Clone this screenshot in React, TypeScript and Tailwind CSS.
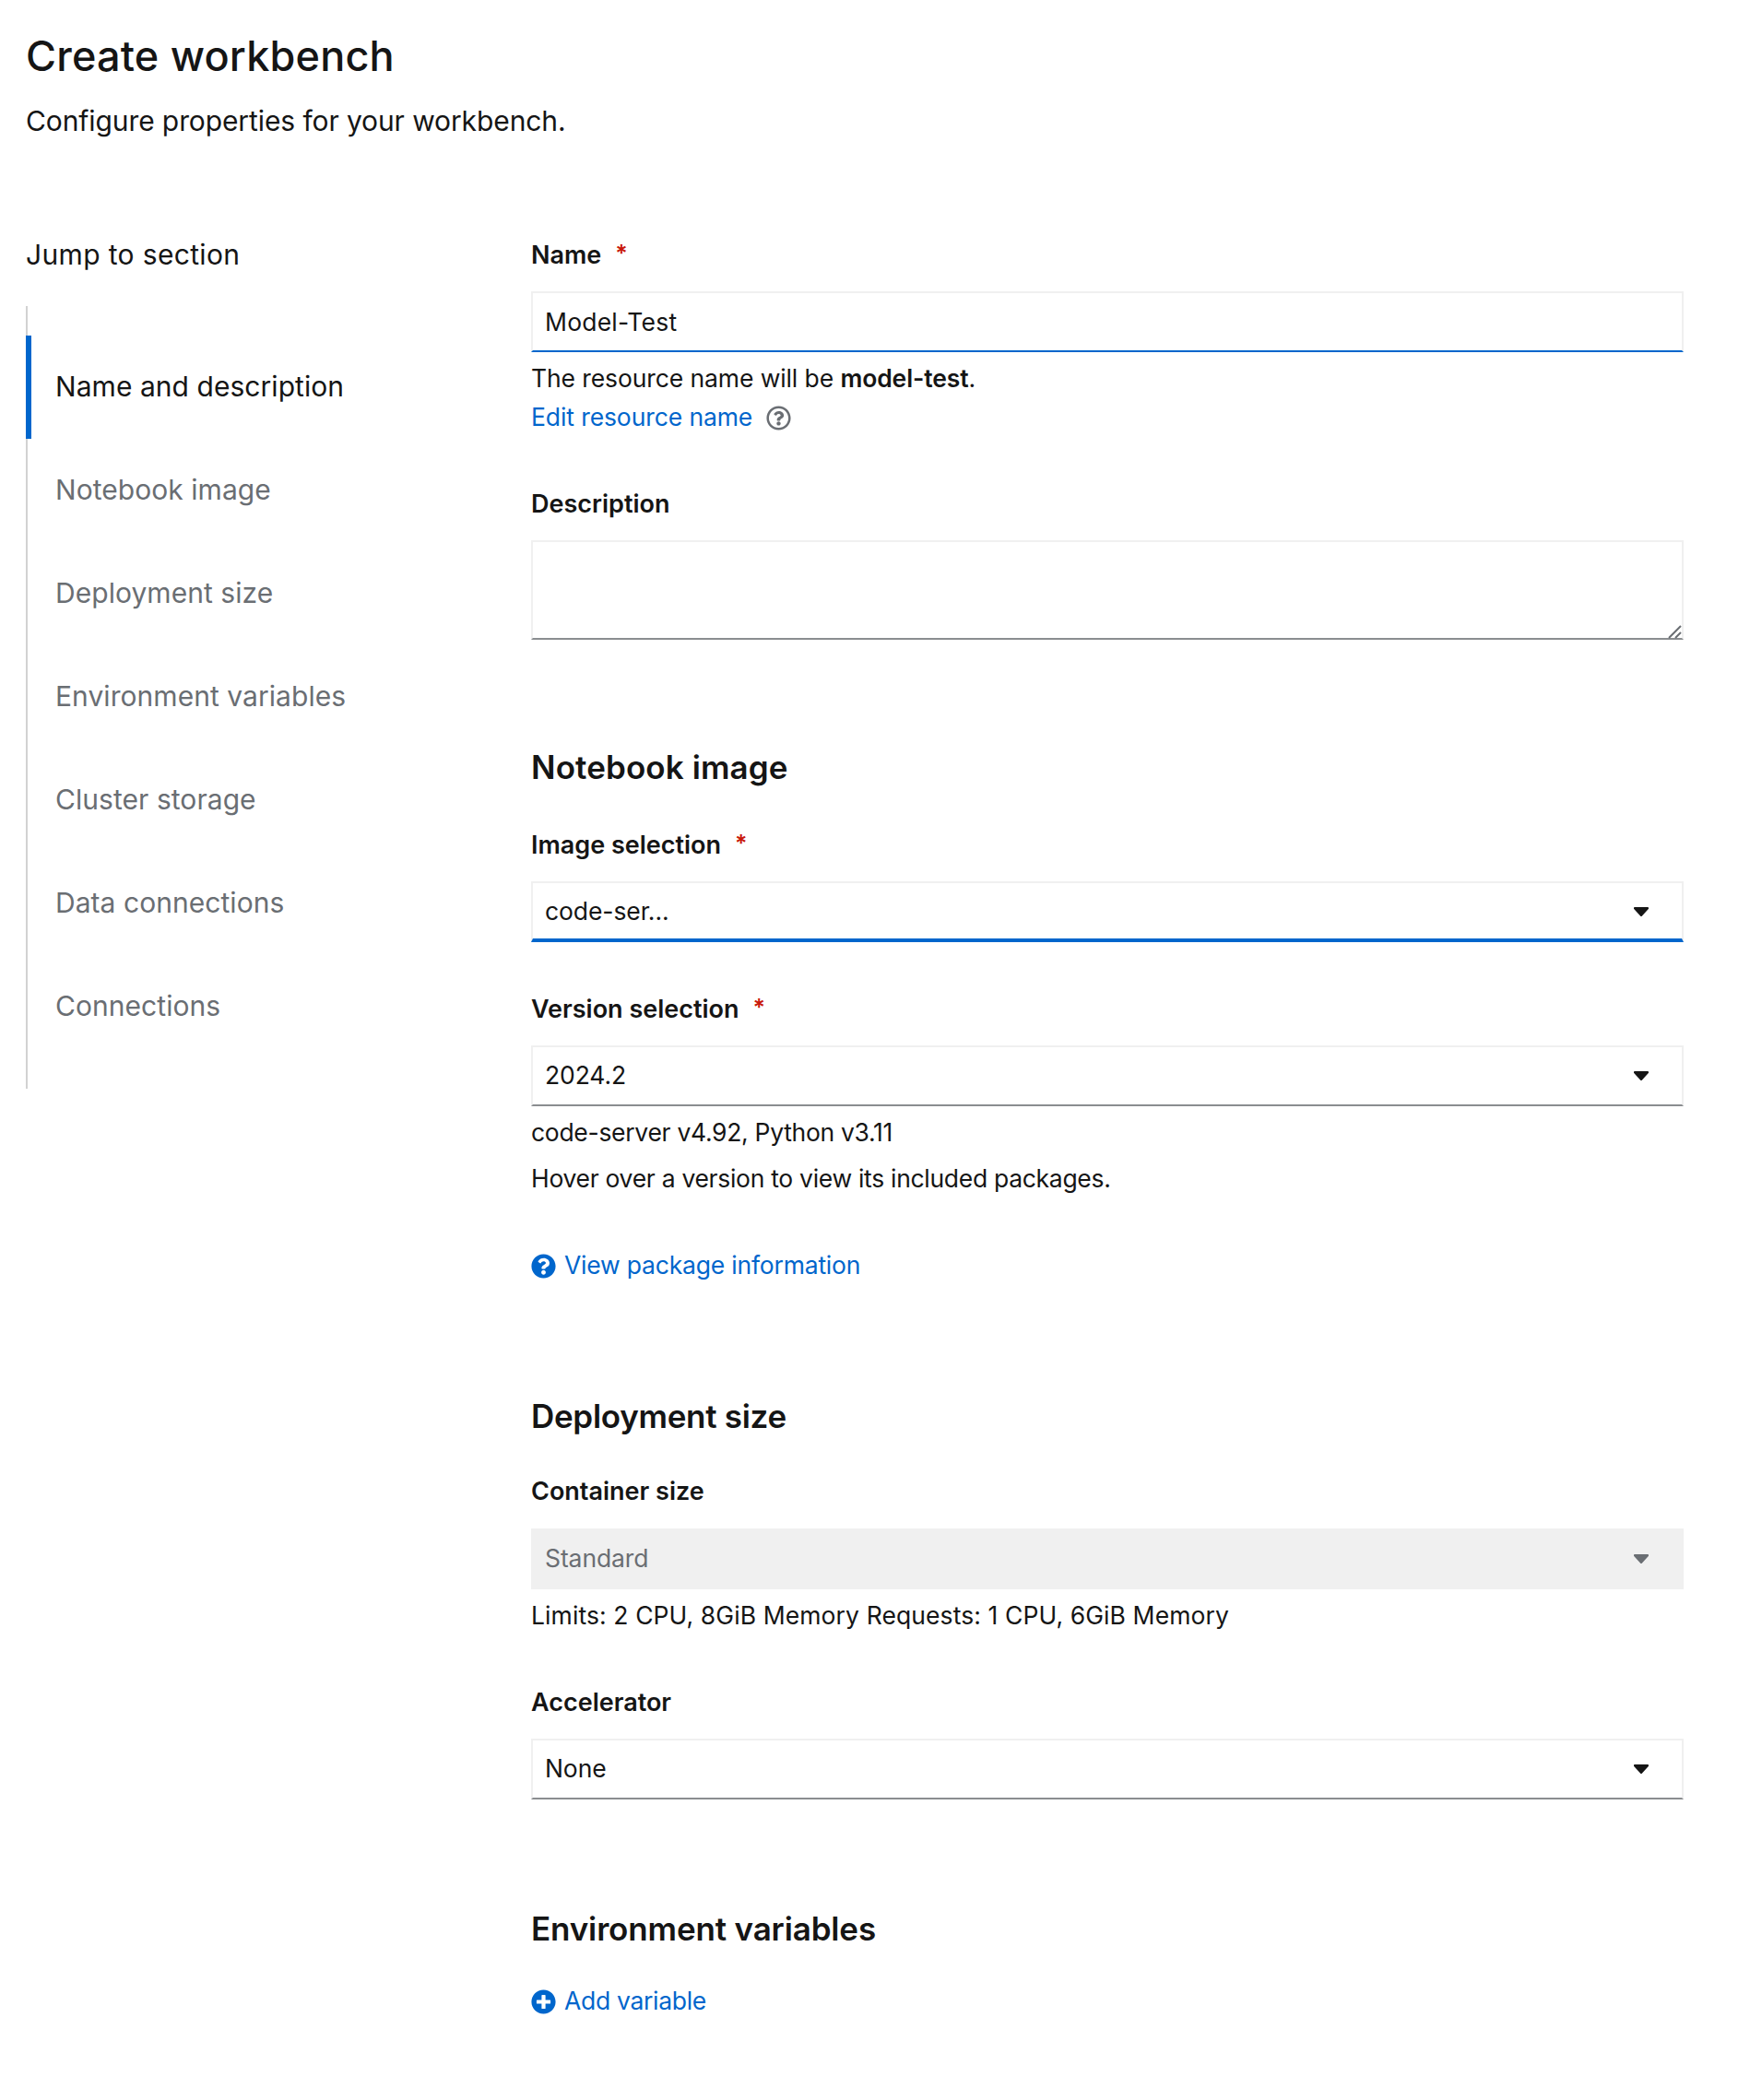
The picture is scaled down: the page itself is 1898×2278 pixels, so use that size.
const font = { fontFamily: 'Inter, "Liberation Sans", sans-serif' };

const navItems = [
  'Name and description',
  'Notebook image',
  'Deployment size',
  'Environment variables',
  'Cluster storage',
  'Data connections',
  'Connections',
];

function Caret({ muted }: { muted?: boolean }) {
  return (
    <svg viewBox="14 192 292 168" preserveAspectRatio="none" className={`h-[10px] w-[16px] ${muted ? 'fill-[#6a6e73]' : 'fill-[#151515]'}`}>
      <path d="M31.3 192h257.3c17.8 0 26.7 21.5 14.1 34.1L174.1 354.8c-7.8 7.8-20.5 7.8-28.3 0L17.2 226.1C4.6 213.5 13.5 192 31.3 192z" />
    </svg>
  );
}

function Label({ text, required, className }: { text: string; required?: boolean; className: string }) {
  return (
    <div className={`flex h-[44px] items-center text-[27px] font-semibold text-[#151515] ${className}`}>
      {text}
      {required && <span className="ml-[15px] -translate-y-[1px] text-[25px] text-[#c9190b]">*</span>}
    </div>
  );
}

function Select({ value, className, focused, disabled }: { value: string; className: string; focused?: boolean; disabled?: boolean }) {
  const tone = disabled
    ? 'border-[#f0f0f0] bg-[#f0f0f0] text-[#6a6e73]'
    : focused
      ? 'border-[#f0f0f0] border-b-[4px] border-b-[#0066cc] pt-[2px]'
      : 'border-[#f0f0f0] border-b-[#8a8d90]';
  return (
    <div className={`flex h-[66px] items-center justify-between border-[2px] pl-[13px] pr-[36px] text-[26.5px] tracking-[-0.1px] ${tone} ${className}`}>
      <span>{value}</span>
      <Caret muted={disabled} />
    </div>
  );
}

function Help({ children, className }: { children: React.ReactNode; className: string }) {
  return <div className={`flex h-[40px] items-center whitespace-pre text-[26.5px] text-[#151515] ${className}`}>{children}</div>;
}

function Heading({ text, className }: { text: string; className: string }) {
  return <h2 className={`flex h-[52px] items-center text-[35px] font-semibold text-[#151515] ${className}`}>{text}</h2>;
}

function LinkButton({ text, path, className }: { text: string; path: string; className: string }) {
  return (
    <div className={`flex h-[40px] items-center gap-[9px] text-[26.5px] text-[#0066cc] ${className}`}>
      <svg viewBox="0 0 512 512" className="h-[27px] w-[27px] fill-[#0066cc]">
        <path d={path} />
      </svg>
      {text}
    </div>
  );
}

export default function App() {
  return (
    <div className="min-h-[2278px] bg-white pl-[28px] pr-[72px] pt-[32px] text-[#151515]" style={font}>
      <h1 className="flex h-[60px] items-center pb-[3px] text-[45px] font-medium tracking-[0.2px]">Create workbench</h1>
      <p className="mt-[18px] flex h-[44px] items-center pb-[2px] text-[30px] tracking-[-0.1px]">Configure properties for your workbench.</p>

      <div className="mt-[101px] flex">
        <aside className="w-[548px] shrink-0">
          <div className="flex h-[44px] items-center pb-[2px] text-[30px] tracking-[0.35px]">Jump to section</div>
          <nav className="mt-[33px] w-[2px] border-l-[2px] border-[#d2d2d2] pb-[33px] pt-[32px]">
            {navItems.map((item, i) => (
              <div
                key={item}
                className={`-ml-[2px] flex h-[112px] w-[500px] items-center whitespace-nowrap pb-[2px] text-[30px] tracking-[0.05px] ${
                  i === 0 ? 'border-l-[6px] border-[#0066cc] pl-[26px] text-[#151515]' : 'pl-[32px] text-[#6a6e73]'
                }`}
              >
                {item}
              </div>
            ))}
          </nav>
        </aside>

        <main className="min-w-0 flex-1">
          <Label text="Name" required className="" />
          <input
            readOnly
            value="Model-Test"
            className="mt-[17px] block h-[66px] w-full border-[2px] border-[#f0f0f0] border-b-[#0066cc] pb-[1px] pl-[13px] text-[26.5px] tracking-[0.2px] outline-none"
          />
          <Help className="mt-[9px] tracking-[-0.1px]">
            The resource name will be <b className="font-semibold">model-test</b>.
          </Help>
          <Help className="mt-[2px] tracking-[-0.1px]">
            <span className="text-[#0066cc]">Edit resource name</span>
            <svg viewBox="0 0 512 512" className="ml-[15px] h-[27px] w-[27px] fill-[#6a6e73]">
              <path d="M256 8C119.043 8 8 119.083 8 256c0 136.997 111.043 248 248 248s248-111.003 248-248C504 119.083 392.957 8 256 8zm0 448c-110.532 0-200-89.431-200-200 0-110.495 89.472-200 200-200 110.491 0 200 89.471 200 200 0 110.53-89.431 200-200 200zm107.244-255.2c0 67.052-72.421 68.084-72.421 92.863V300c0 6.627-5.373 12-12 12h-45.647c-6.627 0-12-5.373-12-12v-8.659c0-35.745 27.1-50.034 47.579-61.516 17.561-9.845 28.324-16.541 28.324-29.579 0-17.246-21.999-28.693-39.784-28.693-23.189 0-33.894 10.977-48.942 29.969-4.057 5.12-11.46 6.071-16.666 2.124l-27.824-21.098c-5.107-3.872-6.251-11.066-2.644-16.363C184.846 131.491 214.94 112 261.794 112c49.071 0 101.45 38.304 101.45 88.8zM298 368c0 23.159-18.841 42-42 42s-42-18.841-42-42 18.841-42 42-42 42 18.841 42 42z" />
            </svg>
          </Help>
          <Label text="Description" className="mt-[52px]" />
          <div className="relative mt-[17px]">
            <textarea className="block h-[108px] w-full resize-none border-[2px] border-[#f0f0f0] border-b-[#8a8d90] outline-none" />
            <svg viewBox="0 0 16 16" className="absolute bottom-[1px] right-[1px] h-[16px] w-[16px] stroke-[#6a6e73] stroke-[2px]">
              <path d="M1 15 L14 2 M8 15 L14 9" />
            </svg>
          </div>

          <Heading text="Notebook image" className="mt-[113px] pb-[1px] tracking-[0.1px]" />
          <Label text="Image selection" required className="mt-[36px]" />
          <Select value="code-ser..." focused className="mt-[17px]" />
          <Label text="Version selection" required className="mt-[51px]" />
          <Select value="2024.2" className="mt-[17px]" />
          <Help className="mt-[9px] tracking-[-0.3px]">code-server v4.92, Python v3.11</Help>
          <Help className="mt-[10px] tracking-[-0.3px]">Hover over a version to view its included packages.</Help>
          <LinkButton
            text="View package information"
            className="mt-[54px] tracking-[-0.2px]"
            path="M504 256c0 136.997-111.043 248-248 248S8 392.997 8 256C8 119.083 119.043 8 256 8s248 111.083 248 248zM262.655 90c-54.497 0-89.255 22.957-116.549 63.758-3.536 5.286-2.353 12.415 2.715 16.258l34.699 26.31c5.205 3.947 12.621 3.008 16.665-2.122 17.864-22.658 30.113-35.797 57.303-35.797 20.429 0 45.698 13.148 45.698 32.958 0 14.976-12.363 22.667-32.534 33.976C247.128 238.528 216 254.941 216 296v4c0 6.627 5.373 12 12 12h56c6.627 0 12-5.373 12-12v-1.333c0-28.462 83.186-29.647 83.186-106.667 0-58.002-60.165-102-116.531-102zM256 338c-25.365 0-46 20.635-46 46 0 25.364 20.635 46 46 46s46-20.636 46-46c0-25.365-20.635-46-46-46z"
          />

          <Heading text="Deployment size" className="mt-[117px] tracking-[-0.3px]" />
          <Label text="Container size" className="mt-[34px]" />
          <Select value="Standard" disabled className="mt-[18px]" />
          <Help className="mt-[9px] tracking-[0.1px]">Limits: 2 CPU, 8GiB Memory Requests: 1 CPU, 6GiB Memory</Help>
          <Label text="Accelerator" className="mt-[52px]" />
          <Select value="None" className="mt-[17px]" />

          <Heading text="Environment variables" className="mt-[114px] tracking-[-0.15px]" />
          <LinkButton
            text="Add variable"
            className="mt-[33px] tracking-[-0.3px]"
            path="M256 8C119 8 8 119 8 256s111 248 248 248 248-111 248-248S393 8 256 8zm144 276c0 6.6-5.4 12-12 12h-92v92c0 6.6-5.4 12-12 12h-56c-6.6 0-12-5.4-12-12v-92h-92c-6.6 0-12-5.4-12-12v-56c0-6.6 5.4-12 12-12h92v-92c0-6.6 5.4-12 12-12h56c6.6 0 12 5.4 12 12v92h92c6.6 0 12 5.4 12 12v56z"
          />
        </main>
      </div>
    </div>
  );
}
